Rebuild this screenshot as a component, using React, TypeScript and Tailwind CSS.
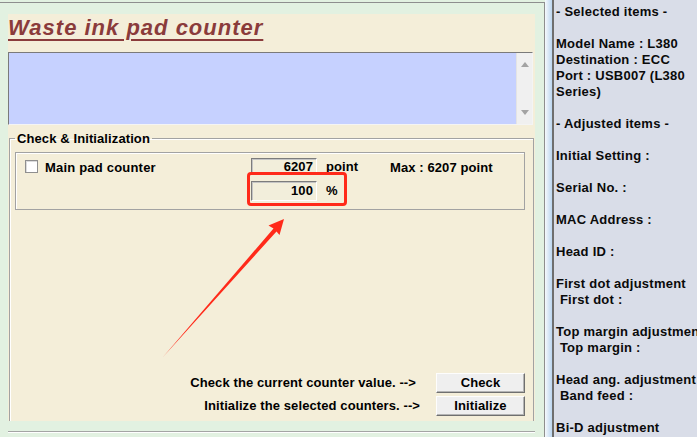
import React from 'react'

const rightLines = [
  '- Selected items -',
  '',
  'Model Name : L380',
  'Destination : ECC',
  'Port : USB007 (L380 Series)',
  '',
  '- Adjusted items -',
  '',
  'Initial Setting :',
  '',
  'Serial No. :',
  '',
  'MAC Address :',
  '',
  'Head ID :',
  '',
  'First dot adjustment',
  ' First dot :',
  '',
  'Top margin adjustment',
  ' Top margin :',
  '',
  'Head ang. adjustment',
  ' Band feed :',
  '',
  'Bi-D adjustment',
]

function Field({ value, tall }: { value: string; tall?: boolean }) {
  return (
    <div
      className={`w-[66px] ${tall ? 'h-[20px]' : 'h-[17px]'} flex items-center justify-end pr-[3px] bg-[#f2eedb] border border-t-[#7c7c7c] border-l-[#7c7c7c] border-r-[#ffffff] border-b-[#ffffff] shadow-[inset_1px_1px_0_#c4c4c4]`}
    >
      {value}
    </div>
  )
}

function Button({ label }: { label: string }) {
  return (
    <div className="w-[89px] h-[20px] flex items-center justify-center bg-[#efefef] border border-t-[#fdfdfd] border-l-[#fdfdfd] border-r-[#6f6f6f] border-b-[#6f6f6f] shadow-[inset_-1px_-1px_0_#b4b4b4]">
      {label}
    </div>
  )
}

export default function App() {
  return (
    <div className="relative w-[697px] h-[437px] overflow-hidden flex bg-[#e2f1e1] font-['Liberation_Sans',Arial,sans-serif] text-[13px] font-bold tracking-[0.1px] text-black">
      {/* left window */}
      <div className="w-[545px] h-[435px] mt-[2px] shrink-0 border-t border-r border-[#8e8e8e] pl-[8px]">
        <div className="mt-[11px] w-[527px] h-[407px] overflow-hidden bg-[#f4eed9]">
          <div className="h-[38px] leading-[27px] text-[22px] italic tracking-[1px] text-[#8a3b3b] underline decoration-2 underline-offset-[4px]">
            Waste ink pad counter
          </div>

          {/* log box */}
          <div className="w-[525px] h-[73px] flex bg-[#c6d1ff] border border-t-[#7a7a7a] border-l-[#7a7a7a] border-r-[#f4f4f4] border-b-[#f4f4f4]">
            <div className="flex-1" />
            <div className="w-[16px] h-full bg-[#f0f0f0] border-l border-[#e4e4e4] flex flex-col items-center justify-between py-[9px]">
              <svg width="8" height="5" viewBox="0 0 8 5">
                <path d="M0 5 L4 0 L8 5 Z" fill="#a3a3a3" />
              </svg>
              <svg width="8" height="5" viewBox="0 0 8 5">
                <path d="M0 0 L4 5 L8 0 Z" fill="#a3a3a3" />
              </svg>
            </div>
          </div>

          <fieldset className="ml-[1px] mt-[5px] w-[525px] h-[300px] border border-[#a2a2a2] shadow-[inset_1px_1px_0_#ffffff]">
            <legend className="ml-[5px] px-[2px] leading-[17px]">Check &amp; Initialization</legend>

            <div className="relative ml-[5px] mt-[5px] w-[510px] h-[58px] border border-[#a2a2a2] shadow-[inset_1px_1px_0_#ffffff] pl-[9px] pt-[5px]">
              <div className="flex items-center h-[17px]">
                <div className="w-[13px] h-[13px] bg-white border border-[#8f8f8f] shadow-[inset_1px_1px_0_#dcdcdc]" />
                <span className="ml-[7px] w-[206px] pt-[2px] tracking-[0.2px]">Main pad counter</span>
                <Field value="6207" />
                <span className="ml-[9px] w-[64px] pt-[1px]">point</span>
                <span className="pt-[2px]">Max : 6207 point</span>
              </div>
              <div className="relative flex items-center mt-[6px] ml-[226px] h-[20px]">
                <Field value="100" tall />
                <span className="ml-[9px]">%</span>
                <div className="absolute left-[-4px] top-[-9px] w-[100px] h-[34px] rounded-[4px] border-[3px] border-[#ff2a1a]" />
              </div>
            </div>

            <div className="mt-[163px] mr-[8px] flex flex-col items-end gap-[3px]">
              <div className="flex items-center">
                <span className="mr-[20px]">Check the current counter value. --&gt;</span>
                <Button label="Check" />
              </div>
              <div className="flex items-center">
                <span className="mr-[16px]">Initialize the selected counters. --&gt;</span>
                <Button label="Initialize" />
              </div>
            </div>
          </fieldset>
        </div>
        <div className="mt-[10px] w-[527px] h-[2px] border-t border-b border-t-[#a4a4a4] border-b-[#ffffff]" />
      </div>

      {/* window edge glow */}
      <div className="w-[7px] h-full shrink-0 bg-linear-to-r from-[#f6f9fc] to-[#bcd6f0]" />

      {/* side panel */}
      <div className="w-[164px] h-full shrink-0 bg-[#d9dde8] border-l-2 border-[#6e6e6e] pl-[2px] pt-[4px] tracking-[0.25px] text-[#0a0a0a]">
        {rightLines.map((line, i) => (
          <div key={i} className="min-h-[16px] leading-[16px] whitespace-pre-wrap">
            {line}
          </div>
        ))}
      </div>

      {/* annotation arrow */}
      <svg className="absolute left-0 top-0 pointer-events-none" width="697" height="437" viewBox="0 0 697 437">
        <polygon
          points="163,357 273.5,228.5 268.5,225.5 284,219 279.5,235 276.5,231.5"
          fill="#ff2a1a"
        />
      </svg>
    </div>
  )
}
